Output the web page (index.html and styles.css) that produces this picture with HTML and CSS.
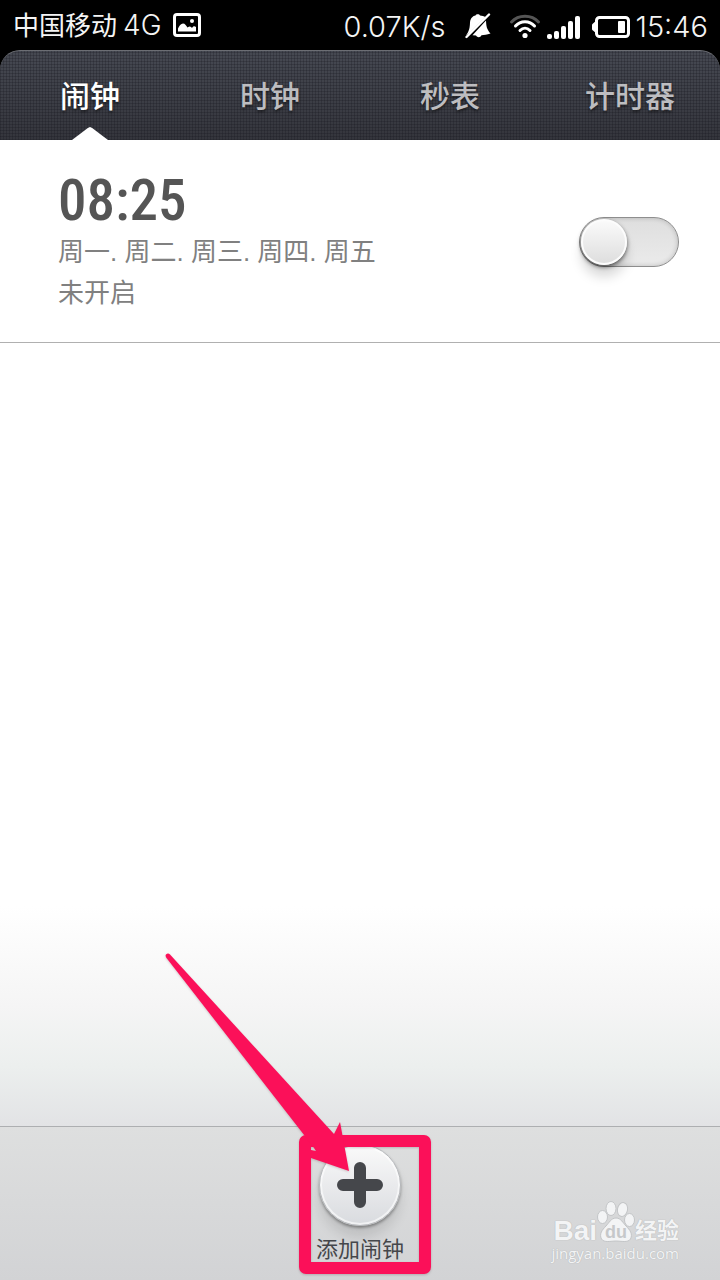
FILE: index.html
```html
<!DOCTYPE html>
<html lang="zh-CN">
<head>
<meta charset="utf-8">
<meta name="viewport" content="width=device-width, initial-scale=1">
<title>闹钟</title>
<link rel="stylesheet" href="styles.css">
</head>
<body>
<div class="screen">
  <header class="status">
    <div class="status-left">
      <span class="carrier">中国移动</span>
      <span class="network">4G</span>
      <svg class="picture-icon" width="28" height="24" viewBox="0 0 28 24" aria-hidden="true">
        <rect x="1.5" y="1.5" width="25" height="21" rx="2.5" fill="none" stroke="#fff" stroke-width="3"/>
        <path d="M5 18.500V15.500C6 13 8 10.500 10 10.500S13 12.500 14.500 14.500C16 13.500 17 13 18 14L19 15C20 13 21.500 12.500 23 14V18.500Z" fill="#fff"/>
        <circle cx="19" cy="8" r="2" fill="#fff"/>
      </svg>
    </div>
    <div class="status-right">
      <span class="speed">0.07K/s</span>
      <svg class="mute-icon" width="26" height="26" viewBox="0 0 26 26" aria-hidden="true">
        <path d="M1 22.500C4.500 18 4.800 14 5 9.500C5.500 5 8 3 10.500 2.600C11 0.800 14.500 0.800 15 2.500C17 2.800 19 3.300 20.500 4L5 19.500Z" fill="#fff"/>
        <path d="M21 7.500C21.300 13 21.500 16 25.500 20.500C22 21.500 19 22 16.500 22.200C15.500 24.500 12.500 25 11 22.500L7.500 22.200Z" fill="#fff"/>
        <path d="M1.500 24L24 1.500" stroke="#fff" stroke-width="2.400" stroke-linecap="round"/>
      </svg>
      <svg class="wifi-icon" width="32" height="26" viewBox="0 0 32 26" fill="none" stroke-linecap="round" stroke-width="3" aria-hidden="true">
        <path d="M2.500 9C9.500 1.200 22.500 1.200 29.500 9" stroke="#555"/>
        <path d="M6.500 13C11.500 7.200 20.500 7.200 25.500 13" stroke="#fff"/>
        <path d="M11 17.500C14 14.500 18 14.500 21 17.500" stroke="#fff"/>
        <circle cx="16" cy="22.500" r="2.600" fill="#fff"/>
      </svg>
      <svg class="signal-icon" width="33" height="24" viewBox="0 0 33 24" fill="#fff" aria-hidden="true">
        <rect y="19" width="5" height="5" rx="2"/>
        <rect x="7" y="16" width="5" height="8" rx="2"/>
        <rect x="14" y="11" width="5" height="13" rx="2"/>
        <rect x="21" y="6" width="5" height="18" rx="2"/>
        <rect x="28" y="1" width="5" height="23" rx="2"/>
      </svg>
      <svg class="battery-icon" width="38" height="22" viewBox="0 0 38 22" aria-hidden="true">
        <rect x="4.500" y="1.500" width="32" height="19" rx="3" fill="none" stroke="#fff" stroke-width="3"/>
        <path d="M5 4L1 7.500Q0 8 0 9V13Q0 14 1 14.500L5 18Z" fill="#fff"/>
        <rect x="26" y="5" width="7" height="12" rx="1" fill="#fff"/>
      </svg>
      <time class="clock">15:46</time>
    </div>
  </header>

  <nav class="tabs">
    <button class="tab tab-active" type="button" aria-current="page">闹钟</button>
    <button class="tab" type="button">时钟</button>
    <button class="tab" type="button">秒表</button>
    <button class="tab" type="button">计时器</button>
  </nav>

  <main class="alarms">
    <label class="alarm">
      <span class="alarm-info">
        <time class="alarm-time">08:25</time>
        <span class="alarm-line">周一. 周二. 周三. 周四. 周五</span>
        <span class="alarm-line">未开启</span>
      </span>
      <input class="switch" type="checkbox">
    </label>
  </main>

  <footer class="toolbar">
    <div class="add">
      <button class="add-button" type="button">
        <span class="add-disc">
          <svg width="46" height="46" viewBox="0 0 46 46" aria-hidden="true">
            <path d="M23 6V40M6 23H40" stroke="#45474b" stroke-width="12" stroke-linecap="round"/>
          </svg>
        </span>
        <span class="add-label">添加闹钟</span>
      </button>
      <svg class="pointer" width="272" height="330" viewBox="0 0 272 330" aria-hidden="true">
        <rect x="143" y="193" width="120" height="127" rx="1" fill="none" stroke="#fb1059" stroke-width="12" stroke-linejoin="round"/>
        <path d="M8 6.500Q6 4.500 4 6.500Q3 8 4.500 10L139 183L152 200L154 203L149 202V210L187 223L178 174L172 186Z" fill="#fb1059"/>
      </svg>
    </div>
    <div class="brand">
      <div class="brand-row">
        <span class="brand-name">Bai</span>
        <svg class="brand-paw" width="38" height="42" viewBox="0 0 38 42" aria-hidden="true">
          <g fill="#f3f4f5" stroke="#c3c5c7" stroke-width="1">
            <ellipse cx="5.500" cy="16" rx="5" ry="6.500"/>
            <ellipse cx="14" cy="7.500" rx="5" ry="7"/>
            <ellipse cx="25.500" cy="8.500" rx="5" ry="7" transform="rotate(12 25.500 8.500)"/>
            <ellipse cx="32.500" cy="19" rx="5" ry="6.500"/>
            <path d="M19 17C24 17 26 22 29 25C33 29 36 33 33.500 38C31 42 24 40 19 40S7 42 4.500 38C2 33 5 29 9 25C12 22 14 17 19 17Z"/>
          </g>
          <text class="brand-du" x="19" y="37" text-anchor="middle">du</text>
        </svg>
        <span class="brand-cn">经验</span>
      </div>
      <span class="brand-url">jingyan.baidu.com</span>
    </div>
  </footer>
</div>
</body>
</html>
```
FILE: styles.css
```css
*,
*::before,
*::after {
  box-sizing: border-box;
}

body {
  margin: 0;
  background: #000;
  font-family: "Liberation Sans", "Noto Sans CJK SC", sans-serif;
}

button {
  margin: 0;
  padding: 0;
  border: 0;
  background: none;
  font-family: inherit;
}

.screen {
  display: flex;
  flex-direction: column;
  min-height: 100vh;
}

/* Status bar */
.status {
  display: flex;
  justify-content: space-between;
  align-items: center;
  height: 50px;
  padding: 0 12px 0 13px;
  color: #f4f4f4;
  font-weight: 300;
  line-height: 50px;
}

.status-left,
.status-right {
  display: flex;
  align-items: center;
}

.carrier {
  padding-bottom: 2px;
  font-family: "Noto Sans CJK SC", sans-serif;
  font-size: 26px;
  font-weight: 400;
}

.network {
  margin: 0 12px 0 6px;
  font-family: Inter, "Liberation Sans", sans-serif;
  font-size: 28px;
}

.speed,
.clock {
  padding-top: 4px;
  font-family: Inter, "Liberation Sans", sans-serif;
  font-size: 29px;
}

.mute-icon {
  margin: 2px 0 0 19px;
}

.wifi-icon {
  margin: 2px 0 0 18px;
}

.signal-icon {
  margin: 3px 0 0 6px;
}

.battery-icon {
  margin: 4px 6px 0 12px;
}

/* Tabs */
.tabs {
  display: grid;
  grid-template-columns: repeat(4, 1fr);
  height: 90px;
  border-top: 1px solid #6c6e74;
  border-radius: 20px 20px 0 0;
  background:
    repeating-linear-gradient(0deg, rgba(20, 20, 28, 0.25) 0 1px, transparent 1px 3px),
    repeating-linear-gradient(90deg, rgba(20, 20, 28, 0.25) 0 1px, transparent 1px 3px),
    linear-gradient(#464952, #34353c);
}

.tab {
  position: relative;
  padding-bottom: 4px;
  color: #bdbdc0;
  font-size: 30px;
  font-weight: 500;
  text-shadow: 0 2px 3px rgba(0, 0, 0, 0.5);
}

.tab-active {
  color: #fff;
}

.tab-active::after {
  content: "";
  position: absolute;
  bottom: 0;
  left: 50%;
  width: 36px;
  height: 13px;
  margin-left: -18px;
  background: #fff;
  clip-path: polygon(0 100%, 44% 8%, 50% 0, 56% 8%, 100% 100%);
}

/* Alarm list */
.alarms {
  flex: 1;
  background: linear-gradient(to top, #e2e3e5 0, #ecefee 60px, #f5f5f5 120px, #fff 220px);
}

.alarm {
  display: flex;
  justify-content: space-between;
  align-items: center;
  padding: 30px 41px 28px 58px;
  border-bottom: 1px solid #b0b0b0;
}

.alarm-info {
  display: flex;
  flex-direction: column;
  color: #808080;
}

.alarm-time {
  color: #555;
  font-family: "Roboto Condensed", Roboto, "Liberation Sans", sans-serif;
  font-size: 57px;
  font-weight: 500;
  line-height: 62px;
}

.alarm-line {
  font-size: 26px;
  line-height: 41px;
}

.switch {
  appearance: none;
  flex: none;
  width: 100px;
  height: 50px;
  margin: 0;
  padding: 1px;
  border: 1px solid #8e8e8e;
  border-radius: 25px;
  background: linear-gradient(#dedede, #ebebeb);
  box-shadow: inset 0 0 5px rgba(0, 0, 0, 0.2);
}

.switch::before {
  content: "";
  display: block;
  width: 46px;
  height: 46px;
  border: 2px solid #fcfcfc;
  border-radius: 50%;
  background: linear-gradient(#fafafa, #dedede);
  box-shadow: 0 2px 4px rgba(0, 0, 0, 0.6), 0 12px 12px rgba(0, 0, 0, 0.15);
}

.switch:checked::before {
  margin-left: auto;
}

/* Bottom toolbar */
.toolbar {
  position: relative;
  display: flex;
  justify-content: center;
  height: 154px;
  padding-top: 17px;
  border-top: 1px solid #adafb1;
  background: linear-gradient(#dedfdf, #d2d3d5);
}

.add {
  position: relative;
}

.add-button {
  display: flex;
  flex-direction: column;
  align-items: center;
  gap: 8px;
}

.add-disc {
  display: grid;
  place-items: center;
  width: 82px;
  height: 82px;
  border: 1px solid #b5b7ba;
  border-radius: 50%;
  background: linear-gradient(#fafafa, #d9dbdf);
  box-shadow: inset 0 0 0 2px rgba(255, 255, 255, 0.6), 0 2px 3px rgba(0, 0, 0, 0.35), 0 12px 12px rgba(0, 0, 0, 0.1);
}

.add-label {
  color: #45474b;
  font-size: 22px;
  line-height: 32px;
}

.pointer {
  position: absolute;
  right: -30px;
  bottom: 2px;
  filter: drop-shadow(0 1px 1px rgba(60, 0, 20, 0.2));
  pointer-events: none;
}

/* Brand mark over the toolbar */
.brand {
  position: absolute;
  right: 41px;
  bottom: 17px;
  display: flex;
  flex-direction: column;
  align-items: flex-end;
  color: #f3f4f5;
  text-shadow: 0 0 1px #b6b8ba, 0 0 1px #b6b8ba;
}

.brand-row {
  display: flex;
  align-items: flex-end;
  line-height: 24px;
}

.brand-name {
  font-size: 28px;
  font-weight: 700;
}

.brand-du {
  fill: #c6c8ca;
  font-size: 18px;
  font-weight: 700;
  text-shadow: none;
}

.brand-cn {
  font-size: 22px;
  font-weight: 700;
}

.brand-url {
  font-family: "Open Sans", "Noto Sans", sans-serif;
  font-size: 15px;
  line-height: 20px;
}
```
